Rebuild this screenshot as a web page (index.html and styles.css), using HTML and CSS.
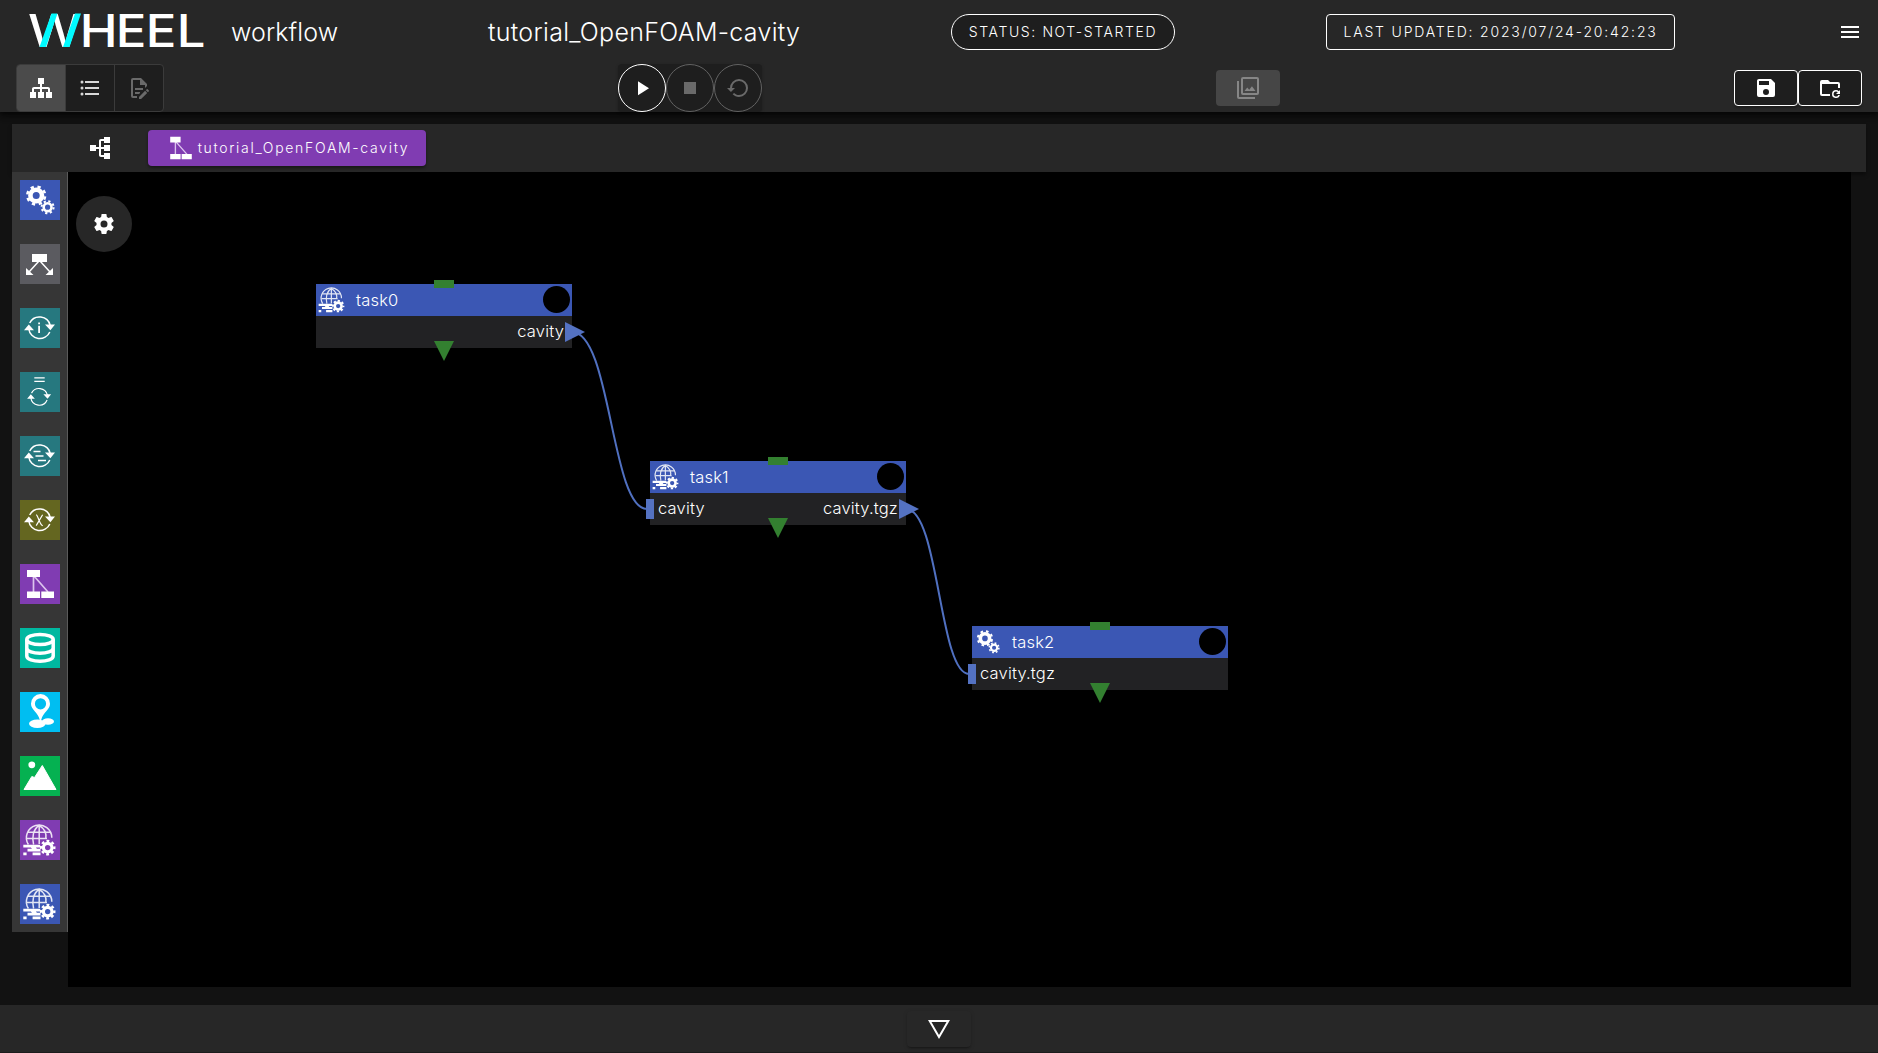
FILE: index.html
```html
<!DOCTYPE html>
<html lang="en">
<head>
<meta charset="utf-8">
<title>WHEEL workflow</title>
<link rel="stylesheet" href="styles.css">
</head>
<body>
<svg class="defs" width="0" height="0" aria-hidden="true">
  <defs>
    <symbol id="sitemap" viewBox="0 0 24 24"><path d="M9,2V8H11V11H5C3.89,11 3,11.89 3,13V16H1V22H7V16H5V13H11V16H9V22H15V16H13V13H19V16H17V22H23V16H21V13C21,11.89 20.11,11 19,11H13V8H15V2H9Z"/></symbol>
    <symbol id="cog" viewBox="0 0 24 24"><path d="M12,15.5A3.5,3.5 0 0,1 8.5,12A3.5,3.5 0 0,1 12,8.5A3.5,3.5 0 0,1 15.5,12A3.5,3.5 0 0,1 12,15.5M19.43,12.97C19.47,12.65 19.5,12.33 19.5,12C19.5,11.67 19.47,11.34 19.43,11L21.54,9.37C21.73,9.22 21.78,8.95 21.66,8.73L19.66,5.27C19.54,5.05 19.27,4.96 19.05,5.05L16.56,6.05C16.04,5.66 15.5,5.32 14.87,5.07L14.5,2.42C14.46,2.18 14.25,2 14,2H10C9.75,2 9.54,2.18 9.5,2.42L9.13,5.07C8.5,5.32 7.96,5.66 7.44,6.05L4.95,5.05C4.73,4.96 4.46,5.05 4.34,5.27L2.34,8.73C2.21,8.95 2.27,9.22 2.46,9.37L4.57,11C4.53,11.34 4.5,11.67 4.5,12C4.5,12.33 4.53,12.65 4.57,12.97L2.46,14.63C2.27,14.78 2.21,15.05 2.34,15.27L4.34,18.73C4.46,18.95 4.73,19.03 4.95,18.95L7.44,17.94C7.96,18.34 8.5,18.68 9.13,18.93L9.5,21.58C9.54,21.82 9.75,22 10,22H14C14.25,22 14.46,21.82 14.5,21.58L14.87,18.93C15.5,18.67 16.04,18.34 16.56,17.94L19.05,18.95C19.27,19.03 19.54,18.95 19.66,18.73L21.66,15.27C21.78,15.05 21.73,14.78 21.54,14.63L19.43,12.97Z"/></symbol>
    <symbol id="task" viewBox="0 0 40 40">
      <g fill="none" stroke="#fff">
        <circle cx="16.2" cy="15.5" r="5.8" stroke-width="4.6"/>
        <circle cx="16.2" cy="15.5" r="8.9" stroke-width="2.6" stroke-dasharray="3.3 3.69" stroke-dashoffset="-1"/>
        <circle cx="27.6" cy="27.2" r="3.9" stroke-width="2.6"/>
        <circle cx="27.6" cy="27.2" r="6" stroke-width="2" stroke-dasharray="2.2 2.51"/>
      </g>
    </symbol>
    <symbol id="subflow" viewBox="0 0 40 40">
      <path d="M13.5,12V28M14,12L28,28" fill="none" stroke="#dcc4ee" stroke-width="1.7"/>
      <path fill="#fff" d="M7,6H20V13H7ZM7,27.5H20V34H7ZM21.3,27.5H34V34H21.3Z"/>
    </symbol>
    <symbol id="cycle" viewBox="0 0 40 40">
      <path fill="none" stroke="#fff" stroke-width="1.5" d="M9.7,15A11,11 0 0 1 30.2,17.5M29.8,24A11,11 0 0 1 8.8,21"/>
      <path fill="#fff" d="M25,16.4H35L30.4,22.2ZM4,22.2H14L8.8,16.4Z"/>
    </symbol>
    <symbol id="remote" viewBox="0 0 40 40">
      <g fill="none" stroke="#fff" stroke-width="1.5" opacity=".85">
        <path d="M8.4,24.5A12.7,12.7 0 1 1 31.8,17.8"/>
        <path d="M13.6,24.5C11.8,18 13,9 19.2,5.5C25.4,9 26.4,15 25.8,19M19.2,5.5V24M8,12.3H30.3M6.8,18.4H27"/>
      </g>
      <g fill="#fff">
        <path d="M3.3,24.8H20V27.4H3.3ZM7.5,28.8H20.5V31.4H7.5ZM3.3,32.6H6.6V35.2H3.3ZM12.6,32.6H20.5V35.2H12.6ZM10,26.5H15L18,30H13Z"/>
      </g>
      <circle cx="27.7" cy="27.6" r="4.3" fill="none" stroke="#fff" stroke-width="3.2"/>
      <circle cx="27.7" cy="27.6" r="6.6" fill="none" stroke="#fff" stroke-width="2.4" stroke-dasharray="2.8 2.384" stroke-dashoffset="1.4"/>
    </symbol>
  </defs>
</svg>

<div class="app">
  <header class="header">
    <div class="header-row">
      <svg class="logo" width="180" height="60" viewBox="0 -10 180 60" role="img" aria-label="WHEEL">
        <text class="logo-text" x="0" y="37" textLength="53" lengthAdjust="spacingAndGlyphs">W</text>
        <path d="M23.5,3.5H29.5L18,37H11.5ZM47,3.5H53L41.5,37H35Z" fill="#00fbff"/>
        <text class="logo-text" y="37" x="45.8 77.7 104.2 131.6" transform="scale(1.13 1)">HEEL</text>
      </svg>
      <span class="app-name">workflow</span>
      <h1 class="project">tutorial_OpenFOAM-cavity</h1>
      <span class="status"><span>STATUS: NOT-STARTED</span></span>
      <span class="updated"><span>LAST UPDATED: 2023/07/24-20:42:23</span></span>
      <svg class="icon menu" viewBox="0 0 24 24"><path d="M3,6H21V8H3V6M3,11H21V13H3V11M3,16H21V18H3V16Z"/></svg>
    </div>
    <div class="header-row tools">
      <div class="toggle">
        <button class="seg active"><svg class="icon"><use href="#sitemap"/></svg></button>
        <button class="seg"><svg class="icon dim" viewBox="0 0 24 24"><path d="M7,5H21V7H7V5M7,13V11H21V13H7M4,4.5A1.5,1.5 0 0,1 5.5,6A1.5,1.5 0 0,1 4,7.5A1.5,1.5 0 0,1 2.5,6A1.5,1.5 0 0,1 4,4.5M4,10.5A1.5,1.5 0 0,1 5.5,12A1.5,1.5 0 0,1 4,13.5A1.5,1.5 0 0,1 2.5,12A1.5,1.5 0 0,1 4,10.5M7,19V17H21V19H7M4,16.5A1.5,1.5 0 0,1 5.5,18A1.5,1.5 0 0,1 4,19.5A1.5,1.5 0 0,1 2.5,18A1.5,1.5 0 0,1 4,16.5Z"/></svg></button>
        <button class="seg"><svg class="icon off" viewBox="0 0 24 24"><path d="M8,12H16V14H8V12M10,20H6V4H13V9H18V12.1L20,10.1V8L14,2H6A2,2 0 0,0 4,4V20A2,2 0 0,0 6,22H10V20M8,18H12.1L13,17.1V16H8V18M20.2,13C20.3,13 20.5,13.1 20.6,13.2L21.9,14.5C22.1,14.7 22.1,15.1 21.9,15.3L20.9,16.3L18.8,14.2L19.8,13.2C19.9,13.1 20,13 20.2,13M20.2,16.9L14.1,23H12V20.9L18.1,14.8L20.2,16.9Z"/></svg></button>
      </div>
      <div class="run">
        <button class="round on"><svg class="icon" viewBox="0 0 24 24"><path d="M8,5.14V19.14L19,12.14L8,5.14Z"/></svg></button>
        <button class="round"><svg class="icon off" viewBox="0 0 24 24"><path d="M18,18H6V6H18V18Z"/></svg></button>
        <button class="round"><svg class="icon off" viewBox="0 0 24 24"><path d="M13,3A9,9 0 0,0 4,12H1L4.96,16.03L9,12H6A7,7 0 0,1 13,5A7,7 0 0,1 20,12A7,7 0 0,1 13,19C11.07,19 9.32,18.21 8.06,16.94L6.64,18.36C8.27,20 10.5,21 13,21A9,9 0 0,0 22,12A9,9 0 0,0 13,3Z"/></svg></button>
      </div>
      <button class="viewer"><svg class="icon" viewBox="0 0 24 24"><path d="M21,17H7V3H21M21,1H7A2,2 0 0,0 5,3V17A2,2 0 0,0 7,19H21A2,2 0 0,0 23,17V3A2,2 0 0,0 21,1M3,5H1V21A2,2 0 0,0 3,23H19V21H3M15.96,10.29L13.21,13.83L11.25,11.47L8.5,15H19.5L15.96,10.29Z"/></svg></button>
      <div class="files">
        <button class="outlined"><svg class="icon" viewBox="0 0 24 24"><path d="M15,9H5V5H15M12,19A3,3 0 0,1 9,16A3,3 0 0,1 12,13A3,3 0 0,1 15,16A3,3 0 0,1 12,19M17,3H5C3.89,3 3,3.9 3,5V19A2,2 0 0,0 5,21H19A2,2 0 0,0 21,19V7L17,3Z"/></svg></button>
        <button class="outlined"><svg class="icon" viewBox="0 0 24 24"><path d="M4,18V8H20V12.1H22V8A2,2 0 0,0 20,6H12L10,4H4A2,2 0 0,0 2,6V18A2,2 0 0,0 4,20H12V18Z"/><path d="M18,14C19.1,14 20.1,14.4 20.8,15.2L22,14V18H18L19.8,16.2C19.3,15.8 18.7,15.5 18,15.5A2.5,2.5 0 1 0 20.3,19H21.9A4,4 0 1 1 18,14Z"/></svg></button>
      </div>
    </div>
  </header>

  <nav class="breadcrumb">
    <svg class="icon tree"><use href="#sitemap"/></svg>
    <button class="crumb"><svg class="crumb-icon" viewBox="6 5 29 30"><use href="#subflow" width="40" height="40"/></svg><span>tutorial_OpenFOAM-cavity</span></button>
  </nav>

  <main class="work">
    <aside class="palette">
      <svg class="tile blue"><use href="#task"/></svg>
      <svg class="tile gray" viewBox="0 0 40 40"><path fill="none" stroke="#fff" stroke-width="1.5" d="M19,17L9,28M20,17L30,28"/><path fill="#fff" d="M12,10H27V18H12ZM6,24L13.5,31H6ZM33,24V31H25.5Z"/></svg>
      <svg class="tile teal" viewBox="0 0 40 40"><use href="#cycle"/><path fill="#fff" d="M18.2,14.5H20V16.3H18.2ZM18.2,17.7H20V25H18.2Z"/></svg>
      <svg class="tile teal" viewBox="0 0 40 40"><path fill="#fff" d="M14.3,5.2H24.7V6.5H14.3ZM14.3,8.8H24.7V10.1H14.3Z"/><use href="#cycle" x="4" y="9.5" width="31" height="31"/></svg>
      <svg class="tile teal" viewBox="0 0 40 40"><use href="#cycle"/><path stroke="#fff" stroke-width="1.3" d="M13.5,15.5H20.5M15.5,20H23.5M18,24.5H26"/></svg>
      <svg class="tile olive" viewBox="0 0 40 40"><use href="#cycle"/><path fill="none" stroke="#fff" stroke-width="1.2" d="M16.2,14.8C18,15 19.8,25.4 22.8,25.6M22.6,14.8L16.2,25.6"/></svg>
      <svg class="tile purple"><use href="#subflow"/></svg>
      <svg class="tile green-teal" viewBox="0 0 40 40"><g fill="none" stroke="#fff" stroke-width="3.5"><ellipse cx="20" cy="11.5" rx="13.2" ry="5"/><path d="M6.8,11.5V28C6.8,35 33.2,35 33.2,28V11.5M6.8,20C6.8,27 33.2,27 33.2,20"/></g></svg>
      <svg class="tile cyan" viewBox="0 0 40 40"><path fill="#fff" fill-rule="evenodd" d="M20.5,2A9.6,9.6 0 0 1 30,11.8C30,18 23,20 21.2,28H19.8C18,20 11,18 11,11.8A9.6,9.6 0 0 1 20.5,2ZM20.5,6.2A5.6,5.6 0 1 0 20.5,17.4A5.6,5.6 0 1 0 20.5,6.2Z"/><ellipse cx="17.3" cy="31.8" rx="8.3" ry="4.2" fill="#fff"/><ellipse cx="28" cy="29.5" rx="6" ry="3.3" fill="#fff"/></svg>
      <svg class="tile green" viewBox="0 0 40 40"><circle cx="11.8" cy="8.8" r="3.4" fill="#fff"/><path fill="#fff" stroke="#fff" stroke-linejoin="round" d="M4,33.5L11.8,20.5L14.5,21.5L22.3,9.5L36,33.5Z"/></svg>
      <svg class="tile purple"><use href="#remote"/></svg>
      <svg class="tile blue"><use href="#remote"/></svg>
    </aside>

    <section class="canvas">
      <svg class="links" width="1783" height="815" viewBox="68 172 1783 815">
        <path d="M572,332C611,332 611,509 647,509M906,509C939,509 939,674 969,674"/>
      </svg>
      <button class="settings"><svg class="icon"><use href="#cog"/></svg></button>

      <article class="node node-0">
        <div class="node-head"><svg class="node-icon"><use href="#remote"/></svg><span class="node-name">task0</span><i class="state"></i></div>
        <div class="node-body"><span></span><span>cavity</span></div>
        <i class="pin-top"></i><i class="pin-bottom"></i><i class="pin-out"></i>
      </article>
      <article class="node node-1">
        <div class="node-head"><svg class="node-icon"><use href="#remote"/></svg><span class="node-name">task1</span><i class="state"></i></div>
        <div class="node-body"><span>cavity</span><span>cavity.tgz</span></div>
        <i class="pin-top"></i><i class="pin-bottom"></i><i class="pin-in"></i><i class="pin-out"></i>
      </article>
      <article class="node node-2">
        <div class="node-head"><svg class="node-icon"><use href="#task"/></svg><span class="node-name">task2</span><i class="state"></i></div>
        <div class="node-body"><span>cavity.tgz</span><span></span></div>
        <i class="pin-top"></i><i class="pin-bottom"></i><i class="pin-in"></i>
      </article>
    </section>
  </main>

  <footer class="footer">
    <button class="drawer"><svg class="icon" viewBox="0 0 24 24"><path transform="rotate(180 12 12)" d="M12,2L1,21H23M12,6L19.53,19H4.47"/></svg></button>
  </footer>
</div>
</body>
</html>
```
FILE: styles.css
```css
* { box-sizing: border-box; }
body {
  margin: 0;
  background: #121212;
  color: #fff;
  font-family: Inter, "Liberation Sans", sans-serif;
  font-weight: 300;
  overflow: hidden;
}
button {
  margin: 0;
  padding: 0;
  border: 0;
  color: inherit;
  font: inherit;
  background: none;
  display: flex;
  align-items: center;
  justify-content: center;
}
.defs { position: absolute; }
.app { height: 1053px; display: flex; flex-direction: column; }
.icon { width: 24px; height: 24px; fill: #fff; flex: none; display: block; }
.icon.dim { fill: #d8d8d8; }
.icon.off { fill: #6a6a6a; }

/* header */
.header {
  height: 112px;
  flex: none;
  background: #272727;
  box-shadow: 0 2px 4px -1px rgba(0,0,0,.5), 0 4px 5px rgba(0,0,0,.3), 0 1px 10px rgba(0,0,0,.3);
}
.header-row { height: 64px; display: flex; align-items: center; white-space: nowrap; }
.header-row.tools { height: 48px; padding: 0 16px; }
.logo { margin-left: 28px; margin-top: -4px; flex: none; overflow: visible; }
.logo-text { font-size: 45px; font-weight: 500; fill: #fff; }
.app-name { margin-left: 23px; width: 257px; font-size: 25px; letter-spacing: .1px; }
.project { margin: 0; width: 463px; font-size: 25px; font-weight: 300; letter-spacing: .3px; }
.status, .updated {
  height: 36px;
  border: 1px solid #fff;
  display: flex;
  align-items: center;
  justify-content: center;
  padding-bottom: 2px;
  font-size: 14px;
}
.status { width: 224px; border-radius: 18px; background: #1e1e1e; letter-spacing: 1.6px; }
.updated { width: 349px; margin-left: 151px; border-radius: 4px; letter-spacing: 1.82px; }
.menu { margin-left: 163px; }

.toggle { width: 148px; height: 48px; display: flex; border: 1px solid #3b3b3b; border-radius: 4px; background: #1e1e1e; overflow: hidden; }
.seg { flex: 1; border-left: 1px solid #3b3b3b; }
.seg:first-child { border-left: 0; }
.seg.active { background: #4b4b4b; }
.run { margin-left: 454px; display: flex; border-radius: 4px; background: #1e1e1e; box-shadow: 0 1px 3px rgba(0,0,0,.25); }
.round { width: 48px; height: 48px; border: 1px solid #626262; border-radius: 50%; }
.round.on { border-color: #fff; }
.viewer { width: 64px; height: 36px; margin-left: 454px; border-radius: 4px; background: #464646; }
.viewer .icon { fill: #868686; }
.files { margin-left: auto; display: flex; }
.outlined { width: 64px; height: 36px; border: 1px solid #fff; border-radius: 4px; background: #1e1e1e; box-shadow: 0 2px 2px rgba(0,0,0,.25); }

/* breadcrumb */
.breadcrumb {
  height: 48px;
  flex: none;
  margin: 12px 12px 0;
  padding-left: 76px;
  display: flex;
  align-items: center;
  background: #272727;
  box-shadow: 0 3px 4px rgba(0,0,0,.4);
}
.tree { transform: rotate(-90deg); }
.crumb { width: 278px; height: 36px; margin-left: 36px; padding-left: 4px; border-radius: 4px; background: #803cb2; font-size: 14px; letter-spacing: 1.7px; box-shadow: 0 2px 3px rgba(0,0,0,.4); }
.crumb span { padding-bottom: 2px; }
.crumb-icon { width: 24px; height: 24px; margin-right: 5px; }

/* workspace */
.work { height: 833px; flex: none; display: flex; align-items: flex-start; padding-left: 12px; }
.palette {
  width: 56px;
  height: 760px;
  padding: 8px 0 0 8px;
  display: flex;
  flex-direction: column;
  gap: 24px;
  background: #363636;
  border-right: 1px solid #5a5a5a;
}
.tile { width: 40px; height: 40px; flex: none; display: block; }
.blue { background: #3b57b4; }
.gray { background: #5b5b60; }
.teal { background: #26787f; }
.olive { background: #646620; }
.purple { background: #803cb2; }
.green-teal { background: #00b8a0; }
.cyan { background: #00bef1; }
.green { background: #05b151; }
.canvas { position: relative; width: 1783px; height: 815px; background: #000; }
.links { position: absolute; left: 0; top: 0; fill: none; stroke: #5070c0; stroke-width: 2; }
.settings { position: absolute; left: 8px; top: 24px; width: 56px; height: 56px; border-radius: 50%; background: #272727; }

/* nodes on the workflow canvas */
.node { position: absolute; width: 256px; font-size: 16.5px; letter-spacing: .18px; }
.node-0 { left: 248px; top: 112px; }
.node-1 { left: 582px; top: 289px; }
.node-2 { left: 904px; top: 454px; }
.node-head { height: 32px; display: flex; align-items: center; background: #3b57b4; padding-right: 2px; }
.node-icon { width: 32px; height: 32px; flex: none; }
.node-name { margin-left: 8px; padding-bottom: 1px; flex: 1; }
.state { width: 27px; height: 27px; margin-top: -1px; border-radius: 50%; background: #000; }
.node-body { height: 32px; padding: 0 8px 2px; display: flex; align-items: center; justify-content: space-between; background: #222224; }
.pin-top { position: absolute; left: 118px; top: -4px; width: 20px; height: 8px; background: #338030; }
.pin-bottom { position: absolute; left: 118px; top: 57px; width: 20px; height: 20px; background: #338030; clip-path: polygon(0 0, 100% 0, 50% 100%); }
.pin-in { position: absolute; left: -4px; top: 38px; width: 8px; height: 20px; background: #5472c2; }
.pin-out { position: absolute; left: 249px; top: 38px; width: 20px; height: 20px; background: #5472c2; clip-path: polygon(0 0, 100% 50%, 0 100%); }

/* footer */
.footer { height: 48px; flex: none; display: flex; justify-content: center; padding-top: 6px; background: #272727; border-bottom: 1px solid #1c1c1c; }
.drawer { width: 64px; height: 36px; border-radius: 4px; background: #272727; box-shadow: 0 2px 2px -1px rgba(0,0,0,.35), 0 1px 4px rgba(0,0,0,.15); }
```
